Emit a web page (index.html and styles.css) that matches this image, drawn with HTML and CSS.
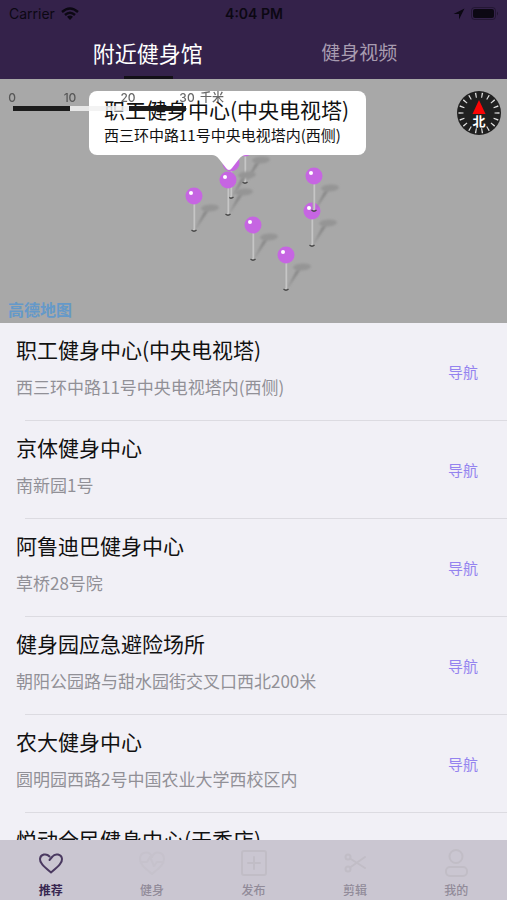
FILE: index.html
```html
<!DOCTYPE html>
<html lang="zh-CN">
<head>
<meta charset="utf-8">
<meta name="viewport" content="width=device-width, initial-scale=1">
<title>附近健身馆</title>
<link rel="stylesheet" href="styles.css">
</head>
<body>
<div class="app">
  <header class="header">
    <div class="status">
      <div class="status-left">
        <span>Carrier</span>
        <svg class="wifi" viewBox="0 0 18 13" aria-hidden="true">
          <path d="M1 5Q9-2 17 5M4 8Q9 3.400 14 8" fill="none" stroke="currentColor" stroke-width="2.400"/>
          <path d="M6 9.800Q9 7.200 12 9.800L9 13Z" fill="currentColor"/>
        </svg>
      </div>
      <time class="clock">4:04 PM</time>
      <div class="status-right">
        <svg class="locate" viewBox="0 0 12 12" aria-hidden="true"><path d="M11.500 .5L.5 6H6V11.500Z" fill="currentColor"/></svg>
        <svg class="battery" viewBox="0 0 28 13" aria-hidden="true">
          <rect x=".5" y=".5" width="24" height="12" rx="3" fill="none" stroke="currentColor" opacity=".4"/>
          <rect x="2" y="2" width="21" height="9" rx="2" fill="currentColor"/>
          <path d="M26 4.500Q28 6.500 26 8.500Z" fill="currentColor" opacity=".5"/>
        </svg>
      </div>
    </div>
    <nav class="tabs">
      <a class="tab tab-active" href="#gyms">附近健身馆</a>
      <a class="tab" href="#videos">健身视频</a>
    </nav>
  </header>

  <section class="map" aria-label="地图">
    <svg class="pins" viewBox="0 0 507 244" aria-hidden="true">
      <defs>
        <filter id="soft" x="-50%" y="-50%" width="200%" height="200%"><feGaussianBlur stdDeviation="1.200"/></filter>
        <g id="pin">
          <g filter="url(#soft)">
            <path d="M1 34L10 16L15 14Z" fill="#777" opacity=".7"/>
            <ellipse cx="16" cy="12" rx="9" ry="3.500" fill="#959595" transform="rotate(-5 16 12)"/>
          </g>
          <path d="M0 7V34" stroke="#c6c6c6" stroke-width="2.400"/>
          <path d="M-1 8V33" stroke="#999" stroke-width=".6"/>
          <path d="M-2.500 34Q0 36.500 2.500 34" fill="none" stroke="#484848" stroke-width="1.300"/>
          <circle r="8.500" fill="#c665e2"/>
          <circle cx="-3" cy="-3" r="2" fill="#fff"/>
        </g>
      </defs>
      <use href="#pin" x="245" y="69"/>
      <use href="#pin" x="231" y="84"/>
      <use href="#pin" x="228" y="101"/>
      <use href="#pin" x="194" y="117"/>
      <use href="#pin" x="312" y="132"/>
      <use href="#pin" x="314" y="97"/>
      <use href="#pin" x="253" y="146"/>
      <use href="#pin" x="286" y="176"/>
    </svg>
    <div class="callout">
      <strong class="callout-title">职工健身中心(中央电视塔)</strong>
      <span class="callout-text">西三环中路11号中央电视塔内(西侧)</span>
      <svg class="callout-tip" viewBox="0 0 34 16" aria-hidden="true"><path d="M0 0Q4 0 7 4L14 13Q17 17 20 13L27 4Q30 0 34 0Z" fill="#fff"/></svg>
    </div>
    <svg class="scale" viewBox="0 0 240 36" role="img" aria-label="比例尺">
      <g class="scale-text">
        <text x="12" y="23" text-anchor="middle">0</text>
        <text x="70" y="23" text-anchor="middle">10</text>
        <text x="128" y="23" text-anchor="middle">20</text>
        <text x="187" y="23" text-anchor="middle">30</text>
        <text x="200" y="23">千米</text>
      </g>
      <path d="M13 29.500H70M129 29.500H186" stroke="#1c1c1c" stroke-width="5"/>
      <path d="M70 29.500H129" stroke="#f2f2f2" stroke-width="5" opacity=".85"/>
    </svg>
    <svg class="compass" viewBox="0 0 44 44" role="img" aria-label="指北针">
      <circle cx="22" cy="22" r="22" fill="#202020"/>
      <circle class="compass-ticks" cx="22" cy="22" r="18" pathLength="180"/>
      <path d="M22 9L28.500 23H15.500Z" fill="#fb0505"/>
      <text class="compass-text" x="22" y="35" text-anchor="middle">北</text>
    </svg>
    <span class="map-brand">高德地图</span>
  </section>

  <main class="list" id="gyms">
    <article class="row"><div class="info"><h2 class="name">职工健身中心(中央电视塔)</h2><p class="address">西三环中路11号中央电视塔内(西侧)</p></div><button class="go" type="button">导航</button></article>
    <article class="row"><div class="info"><h2 class="name">京体健身中心</h2><p class="address">南新园1号</p></div><button class="go" type="button">导航</button></article>
    <article class="row"><div class="info"><h2 class="name">阿鲁迪巴健身中心</h2><p class="address">草桥28号院</p></div><button class="go" type="button">导航</button></article>
    <article class="row"><div class="info"><h2 class="name">健身园应急避险场所</h2><p class="address">朝阳公园路与甜水园街交叉口西北200米</p></div><button class="go" type="button">导航</button></article>
    <article class="row"><div class="info"><h2 class="name">农大健身中心</h2><p class="address">圆明园西路2号中国农业大学西校区内</p></div><button class="go" type="button">导航</button></article>
    <article class="row"><div class="info"><h2 class="name">悦动全民健身中心(天秀店)</h2></div></article>
  </main>

  <nav class="bar">
    <a class="item item-active" href="#home">
      <svg class="icon" viewBox="0 0 28 28" aria-hidden="true"><path d="M12.500 11L15.500 7.500C18 4 24.500 5 25 10C25.400 14 21 17.500 14 23.500C7 17.500 2.600 14 3 10C3.500 5 9.500 4 12.500 7.500"/></svg>
      <span>推荐</span>
    </a>
    <a class="item" href="#fitness">
      <svg class="icon icon-faint" viewBox="0 0 28 28" aria-hidden="true"><path d="M14 8C11 1 2 3 2 10C2 16 8 20 14 25C20 20 26 16 26 10C26 3 17 1 14 8M3 13H9L12 8L16 17L19 13H25"/></svg>
      <span>健身</span>
    </a>
    <a class="item" href="#publish">
      <svg class="icon" viewBox="0 0 28 28" aria-hidden="true"><rect x="2" y="2" width="24" height="24" rx="2"/><path d="M14 8V20M8 14H20"/></svg>
      <span>发布</span>
    </a>
    <a class="item" href="#edit">
      <svg class="icon" viewBox="0 0 28 28" aria-hidden="true"><circle cx="7" cy="8" r="2.500"/><circle cx="7" cy="20" r="2.500"/><path d="M9 9.500L24 19M9 18.500L24 8"/></svg>
      <span>剪辑</span>
    </a>
    <a class="item" href="#me">
      <svg class="icon" viewBox="0 0 28 28" aria-hidden="true"><circle cx="14" cy="7.500" r="6.500"/><rect x="4" y="18" width="21" height="9" rx="4"/></svg>
      <span>我的</span>
    </a>
  </nav>
</div>
</body>
</html>
```

FILE: styles.css
```css
* {
  box-sizing: border-box;
}

body {
  margin: 0;
  font-family: "Noto Sans CJK SC", sans-serif;
  color: #111;
}

a {
  color: inherit;
  text-decoration: none;
}

.app {
  display: flex;
  flex-direction: column;
  height: 100vh;
  overflow: hidden;
  background: #f1f0f6;
}

.header {
  flex: none;
  background: #34224a;
}

.status {
  display: grid;
  grid-template-columns: 1fr auto 1fr;
  align-items: center;
  height: 27px;
  padding: 0 8px 0 9px;
  font-family: Inter, sans-serif;
  font-size: 14px;
  color: #0c0813;
}

.status-left,
.status-right {
  display: flex;
  align-items: center;
  gap: 6px;
}

.status-right {
  justify-content: flex-end;
}

.clock {
  font-weight: 600;
}

.wifi {
  width: 18px;
  height: 13px;
}

.locate {
  width: 12px;
  height: 12px;
}

.battery {
  width: 28px;
  height: 13px;
}

.tabs {
  display: flex;
  height: 52px;
  padding: 0 42px;
}

.tab {
  position: relative;
  flex: 1;
  font-size: 19px;
  line-height: 50px;
  text-align: center;
  color: #a89cb0;
}

.tab-active {
  font-size: 22px;
  color: #fff;
}

.tab-active::after {
  content: "";
  position: absolute;
  bottom: 0;
  left: 50%;
  width: 49px;
  height: 3px;
  margin-left: -24px;
  background: #131017;
}

.map {
  position: relative;
  flex: none;
  height: 244px;
  overflow: hidden;
  background: #a8a8a8;
}

.pins {
  position: absolute;
  top: 0;
  left: 0;
  width: 507px;
  height: 244px;
}

.callout {
  position: absolute;
  top: 12px;
  left: 89px;
  display: flex;
  flex-direction: column;
  width: 277px;
  height: 64px;
  padding: 4px 15px;
  border-radius: 8px;
  background: #fff;
  white-space: nowrap;
}

.callout-title {
  font-size: 21px;
  font-weight: 400;
  line-height: 28px;
}

.callout-text {
  font-size: 15px;
  line-height: 24px;
}

.callout-tip {
  position: absolute;
  top: 64px;
  left: 123px;
  width: 34px;
  height: 16px;
}

.scale {
  position: absolute;
  top: 0;
  left: 0;
  width: 240px;
  height: 36px;
}

.scale-text {
  font-family: Inter, "Noto Sans CJK SC", sans-serif;
  font-size: 12px;
  font-weight: 500;
  fill: #444;
  opacity: 0.8;
}

.compass {
  position: absolute;
  top: 12px;
  right: 6px;
  width: 44px;
  height: 44px;
}

.compass-ticks {
  fill: none;
  stroke: #ddd;
  stroke-width: 5px;
  stroke-dasharray: 2 8;
  stroke-dashoffset: 1;
}

.compass-text {
  font-size: 13px;
  font-weight: 700;
  fill: #fff;
}

.map-brand {
  position: absolute;
  bottom: 3px;
  left: 8px;
  font-size: 16px;
  font-weight: 700;
  line-height: 22px;
  color: #6599c9;
}

.list {
  flex: 1;
  min-height: 0;
  overflow: hidden;
}

.row {
  position: relative;
  display: flex;
  align-items: center;
  justify-content: space-between;
  height: 98px;
  padding: 0 29px 0 16px;
}

.row::after {
  content: "";
  position: absolute;
  right: 0;
  bottom: 0;
  left: 25px;
  height: 1px;
  background: #dcdbe1;
}

.info {
  align-self: flex-start;
  padding-top: 10px;
}

.name {
  margin: 0;
  font-size: 21px;
  font-weight: 400;
  line-height: 32px;
}

.address {
  margin: 8px 0 0;
  font-size: 17px;
  line-height: 28px;
  color: #919097;
}

.go {
  padding: 0;
  border: 0;
  background: none;
  font: inherit;
  font-size: 15px;
  line-height: 24px;
  color: #9483ef;
}

.bar {
  display: flex;
  flex: none;
  height: 60px;
  background: #cac6d1;
}

.item {
  display: flex;
  flex: 1;
  flex-direction: column;
  align-items: center;
  gap: 4px;
  padding-top: 9px;
  font-size: 12px;
  font-weight: 500;
  line-height: 18px;
  color: #918b99;
}

.item-active {
  font-weight: 700;
  color: #372650;
}

.icon {
  width: 28px;
  height: 28px;
  fill: none;
  stroke: #c1bdc6;
  stroke-width: 2px;
  stroke-linecap: round;
  stroke-linejoin: round;
}

.icon-faint {
  stroke: #c6c2cc;
}

.item-active .icon {
  stroke: #4a3960;
}
```
